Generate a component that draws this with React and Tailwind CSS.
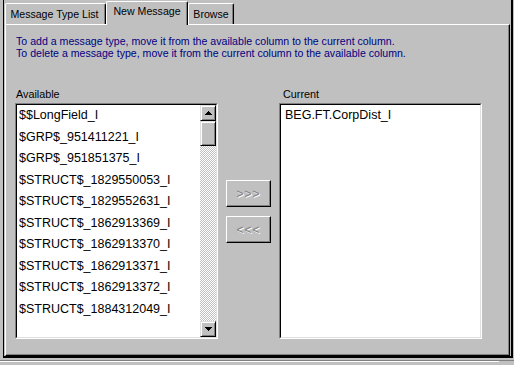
import React from "react";

const items = [
  "$$LongField_I",
  "$GRP$_951411221_I",
  "$GRP$_951851375_I",
  "$STRUCT$_1829550053_I",
  "$STRUCT$_1829552631_I",
  "$STRUCT$_1862913369_I",
  "$STRUCT$_1862913370_I",
  "$STRUCT$_1862913371_I",
  "$STRUCT$_1862913372_I",
  "$STRUCT$_1884312049_I",
];

function Arrow({ up }) {
  return (
    <svg width="7" height="4" viewBox="0 0 7 4" shapeRendering="crispEdges">
      {up ? (
        <g fill="#000">
          <rect x="3" y="0" width="1" height="1" />
          <rect x="2" y="1" width="3" height="1" />
          <rect x="1" y="2" width="5" height="1" />
          <rect x="0" y="3" width="7" height="1" />
        </g>
      ) : (
        <g fill="#000">
          <rect x="0" y="0" width="7" height="1" />
          <rect x="1" y="1" width="5" height="1" />
          <rect x="2" y="2" width="3" height="1" />
          <rect x="3" y="3" width="1" height="1" />
        </g>
      )}
    </svg>
  );
}

const scrollBtn =
  "box-border border border-t-[#dfdfdf] border-l-[#dfdfdf] border-r-black border-b-black shadow-[inset_1px_1px_#fff,inset_-1px_-1px_#808080] bg-[#c0c0c0]";

const pushBtn =
  "box-border w-[45px] h-[27px] border border-t-white border-l-white border-r-black border-b-black shadow-[inset_-1px_-1px_#808080] bg-[#c0c0c0] flex items-center justify-center text-[12px] tracking-[1px] text-[#808080] [text-shadow:1px_1px_0_#fff]";

function ListBox({ children, scroll }) {
  return (
    <div className="box-border h-[236px] border border-t-[#808080] border-l-[#808080] border-r-white border-b-white">
      <div className="box-border h-full border border-t-black border-l-black border-r-[#dfdfdf] border-b-[#dfdfdf] bg-white flex">
        <div className="flex-1 overflow-hidden">{children}</div>
        {scroll && (
          <div className="w-[16px] flex flex-col">
            <div className={`${scrollBtn} h-[16px] flex items-center justify-center`}>
              <Arrow up />
            </div>
            <div className={`${scrollBtn} h-[25px]`} />
            <div className="flex-1 bg-[repeating-conic-gradient(#c0c0c0_0%_25%,#fff_0%_50%)] bg-[length:2px_2px]" />
            <div className={`${scrollBtn} h-[16px] flex items-center justify-center`}>
              <Arrow />
            </div>
          </div>
        )}
      </div>
    </div>
  );
}

export default function App() {
  return (
    <div className="w-[514px] h-[365px] bg-[#c0c0c0] overflow-hidden font-['Liberation_Sans',Arial,sans-serif] text-black">
      <div className="box-border ml-[3px] w-[510px] h-[358px] border-l border-l-black border-r-2 border-r-black border-b-2 border-b-black">
        {/* tab strip */}
        <div className="h-[24px] flex items-start pl-[1px] text-[10.6px]">
          <div className="box-border mt-[3px] w-[101px] h-[21px] border-t border-l border-t-white border-l-white border-r border-r-black shadow-[inset_-1px_0_#808080] rounded-t-[2px] flex items-center justify-center pt-[2px] pr-[2px]">
            Message Type List
          </div>
          <div className="relative z-10 box-border mt-[1px] w-[82px] h-[24px] bg-[#c0c0c0] border-t border-l border-t-white border-l-white border-r border-r-black shadow-[inset_-1px_0_#808080] rounded-t-[2px] flex items-center justify-center pb-[3px]">
            New Message
          </div>
          <div className="box-border mt-[3px] w-[46px] h-[21px] border-t border-l border-t-white border-l-white border-r border-r-black shadow-[inset_-1px_0_#808080] rounded-t-[2px] flex items-center justify-center pt-[2px]">
            Browse
          </div>
        </div>
        {/* panel */}
        <div className="px-[1px]">
          <div className="box-border h-[332px] border border-t-white border-l-white border-r-black border-b-black shadow-[inset_-1px_-1px_#808080]">
            <div className="pt-[10px] pl-[10px] text-[10.6px] leading-[12px] text-[#000080]">
              <div>To add a message type, move it from the available column to the current column.</div>
              <div>To delete a message type, move it from the current column to the available column.</div>
            </div>
            <div className="mt-[29px] pl-[9px] flex">
              <div className="w-[203px]">
                <div className="h-[12px] leading-[12px] text-[10.8px] pl-[1px] mb-[3px]">Available</div>
                <ListBox scroll>
                  {items.map((t) => (
                    <div key={t} className="h-[21.5px] leading-[21.5px] text-[12.5px] pl-[2px] whitespace-nowrap">
                      {t}
                    </div>
                  ))}
                </ListBox>
              </div>
              <div className="w-[61px] pl-[8px] pt-[92px] flex flex-col gap-[9px]">
                <div className={pushBtn}>&gt;&gt;&gt;</div>
                <div className={pushBtn}>&lt;&lt;&lt;</div>
              </div>
              <div className="w-[203px]">
                <div className="h-[12px] leading-[12px] text-[10.8px] pl-[4px] mb-[3px]">Current</div>
                <ListBox>
                  <div className="h-[21.5px] leading-[21.5px] text-[12.5px] pl-[4px] whitespace-nowrap">
                    BEG.FT.CorpDist_I
                  </div>
                </ListBox>
              </div>
            </div>
          </div>
        </div>
      </div>
      <div className="pt-[2px]">
        <div className="border-t border-t-[#808080]">
          <div className="h-px w-[499px] bg-white" />
        </div>
      </div>
    </div>
  );
}
